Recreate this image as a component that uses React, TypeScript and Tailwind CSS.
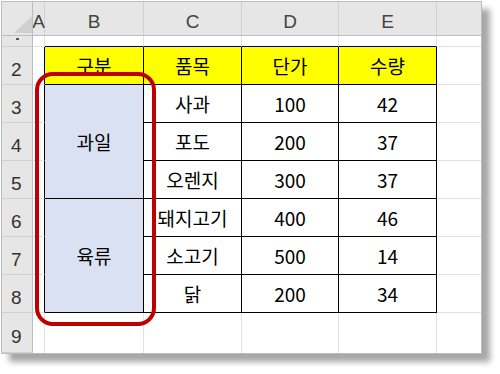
import React from "react";

const font = { fontFamily: '"Liberation Sans", Arial, sans-serif' };
const kfont = { fontFamily: '"Noto Sans CJK KR", "Noto Sans", sans-serif' };

const rows = [
  { c: "사과", d: "100", e: "42" },
  { c: "포도", d: "200", e: "37" },
  { c: "오렌지", d: "300", e: "37" },
  { c: "돼지고기", d: "400", e: "46" },
  { c: "소고기", d: "500", e: "14" },
  { c: "닭", d: "200", e: "34" },
];

function HeadCell({ children, last }: { children?: React.ReactNode; last?: boolean }) {
  return (
    <div
      className={`flex items-center justify-center pt-[6px] bg-[#e6e6e6] border-b border-b-[#bdbdbd] ${
        last ? "" : "border-r border-r-[#d0d0d0]"
      } text-[19px] leading-none text-[#444]`}
      style={font}
    >
      {children}
    </div>
  );
}

function RowHead({ n }: { n: number }) {
  return (
    <div
      className="flex items-center justify-start pl-[9px] pt-[7px] bg-[#e6e6e6] border-r border-r-[#bdbdbd] border-b border-b-[#d0d0d0] text-[19px] leading-none text-[#333]"
      style={font}
    >
      {n}
    </div>
  );
}

const cellCls =
  "flex items-center justify-center border-r border-b border-black text-[19px] leading-none text-black";

export default function App() {
  return (
    <div className="w-[500px] h-[374px] bg-white relative">
      <div className="absolute left-[1px] top-[1px] w-[481px] h-[353px] border border-[#bcbcbc] bg-white shadow-[8px_8px_6px_rgba(0,0,0,0.35)] overflow-hidden">
        <div
          className="grid h-full w-full"
          style={{
            gridTemplateColumns: "31px 12px 99px 98px 97px 98px 1fr",
            gridTemplateRows: "34px 11px repeat(7, 38px) 1fr",
          }}
        >
          {/* header row */}
          <div className="relative bg-[#e6e6e6] border-r border-r-[#bdbdbd] border-b border-b-[#bdbdbd]">
            <svg className="absolute left-[12px] top-[14px]" width="18" height="17" viewBox="0 0 18 17">
              <polygon points="18,0 18,17 0,17" fill="#cfcfcf" />
            </svg>
          </div>
          <HeadCell>A</HeadCell>
          <HeadCell>B</HeadCell>
          <HeadCell>C</HeadCell>
          <HeadCell>D</HeadCell>
          <HeadCell>E</HeadCell>
          <HeadCell last />

          {/* row 1 (collapsed) */}
          <div className="relative bg-[#e6e6e6] border-r border-r-[#bdbdbd] border-b border-b-[#d0d0d0]">
            <div className="absolute left-[14px] top-[2px] w-[3px] h-[2px] bg-[#555]" />
          </div>
          <div className="border-r border-b border-[#e1e1e1]" />
          <div className="border-r border-r-[#e1e1e1] border-b border-b-black" />
          <div className="border-r border-r-[#e1e1e1] border-b border-b-black" />
          <div className="border-r border-r-[#e1e1e1] border-b border-b-black" />
          <div className="border-r border-r-[#e1e1e1] border-b border-b-black" />
          <div className="border-b border-[#e1e1e1]" />

          {/* row 2 */}
          <RowHead n={2} />
          <div className="border-r border-r-black border-b border-b-[#e1e1e1]" />
          {["구분", "품목", "단가", "수량"].map((t) => (
            <div key={t} className={`${cellCls} bg-[#ffff00]`} style={kfont}>
              {t}
            </div>
          ))}
          <div className="border-b border-[#e1e1e1]" />

          {rows.map((r, i) => {
            const rowNum = i + 3;
            return (
              <React.Fragment key={rowNum}>
                <RowHead n={rowNum} />
                <div className="border-r border-r-black border-b border-b-[#e1e1e1]" />
                {i === 0 && (
                  <div className={`${cellCls} row-span-3 bg-[#d9e1f2]`} style={kfont}>
                    과일
                  </div>
                )}
                {i === 3 && (
                  <div className={`${cellCls} row-span-3 bg-[#d9e1f2]`} style={kfont}>
                    육류
                  </div>
                )}
                <div className={cellCls} style={kfont}>
                  {r.c}
                </div>
                <div className={cellCls} style={kfont}>
                  {r.d}
                </div>
                <div className={cellCls} style={kfont}>
                  {r.e}
                </div>
                <div className="border-b border-[#e1e1e1]" />
              </React.Fragment>
            );
          })}

          {/* row 9 */}
          <RowHead n={9} />
          <div className="border-r border-[#e1e1e1]" />
          <div className="border-r border-[#e1e1e1]" />
          <div className="border-r border-[#e1e1e1]" />
          <div className="border-r border-[#e1e1e1]" />
          <div className="border-r border-[#e1e1e1]" />
          <div />
        </div>

        {/* red highlight */}
        <div className="absolute left-[33px] top-[70px] w-[121px] h-[254px] border-[4px] border-[#c00000] rounded-[18px] pointer-events-none" />
      </div>
    </div>
  );
}
